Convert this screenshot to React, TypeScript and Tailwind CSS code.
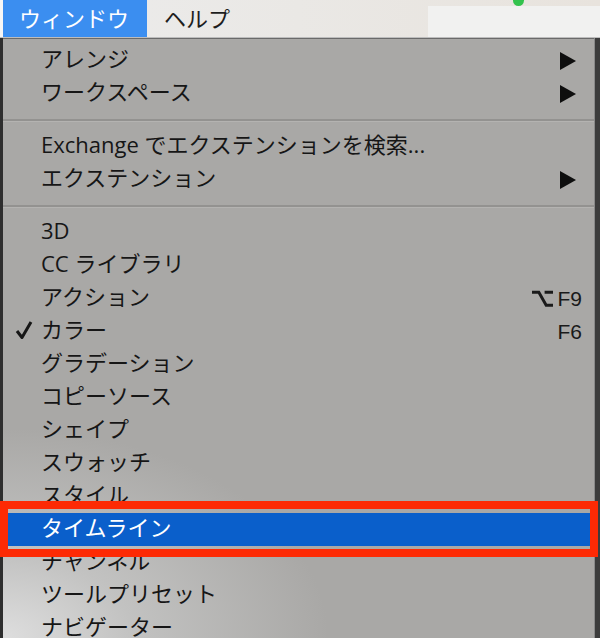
import { ReactNode } from 'react';

interface MenuItem {
    label: string;
    sub?: boolean;
    shortcut?: ReactNode;
    checked?: boolean;
    active?: boolean;
}

const OptionKey = () => (
    <svg width="21" height="19" viewBox="0 0 20 18" className="mr-[4px]">
        <path d="M0 3 H6.5 L13.5 15.5 H20 M12 3 H20" fill="none" stroke="#1a1a1a" strokeWidth="2.8" />
    </svg>
);

const groups: MenuItem[][] = [
    [
        { label: 'アレンジ', sub: true },
        { label: 'ワークスペース', sub: true },
    ],
    [
        { label: 'Exchange でエクステンションを検索...' },
        { label: 'エクステンション', sub: true },
    ],
    [
        { label: '3D' },
        { label: 'CC ライブラリ' },
        { label: 'アクション', shortcut: <><OptionKey />F9</> },
        { label: 'カラー', checked: true, shortcut: 'F6' },
        { label: 'グラデーション' },
        { label: 'コピーソース' },
        { label: 'シェイプ' },
        { label: 'スウォッチ' },
        { label: 'スタイル' },
        { label: 'タイムライン', active: true },
        { label: 'チャンネル' },
        { label: 'ツールプリセット' },
        { label: 'ナビゲーター' },
    ],
];

function Row({ item }: { item: MenuItem }) {
    return (
        <div
            className={`relative flex items-center h-[33px] mx-[3px] pl-[35px] pr-[9px] pb-[6px] ${item.active ? 'bg-[#0a5fcb] text-white' : 'text-[#161616]'}`}
        >
            {item.checked && (
                <svg width="18" height="20" viewBox="0 0 18 20" className="absolute left-[9px] top-[5px]">
                    <path d="M2 11 L7 17.5 L16 2" fill="none" stroke="#161616" strokeWidth="3" strokeLinejoin="round" />
                </svg>
            )}
            <span className="flex-1 font-[family-name:'Open_Sans','Noto_Sans_CJK_JP',sans-serif] text-[22px] leading-none whitespace-nowrap">
                {item.label}
            </span>
            {item.sub && (
                <svg width="16" height="18" viewBox="0 0 16 18" className="mr-[6px] mt-[6px]">
                    <polygon points="0,0 16,9 0,18" fill="#0e0e0e" />
                </svg>
            )}
            {item.shortcut && (
                <span className="flex items-center mt-[6px] font-['Liberation_Sans',sans-serif] text-[21px] leading-none text-[#1a1a1a]">
                    {item.shortcut}
                </span>
            )}
        </div>
    );
}

export default function App() {
    return (
        <div className="relative w-[600px] h-[638px] overflow-hidden bg-[#3a3a3a] font-['Noto_Sans_CJK_JP',sans-serif]">
            {/* menubar */}
            <div className="relative flex h-[38px] bg-gradient-to-r from-[#ececec] via-[#eae8e5] to-[#e8e3dd] border-b border-[#bdbdbd]">
                <div className="w-[3px] bg-[#f6f6f6]" />
                <div className="flex items-center w-[144px] pl-[16px] pb-[3px] bg-[#3b8ef0] text-white text-[22px] leading-none">
                    ウィンドウ
                </div>
                <div className="flex items-center pl-[17px] pb-[3px] text-[#1e1e1e] text-[22px] leading-none">ヘルプ</div>
                <div className="ml-auto mt-[6px] w-[172px] bg-[#f1f1f0]" />
                <div className="absolute left-[513px] top-[-5px] w-[11px] h-[11px] rounded-full bg-[#33c24d]" />
            </div>

            <div className="flex h-[600px]">
                <div className="w-[3px] bg-[#2e2e2e]" />
                <div className="flex-1 border-t border-[#6a6a6a] pt-[5px] bg-[radial-gradient(ellipse_55%_35%_at_0%_100%,#dedede_0%,#c2c2c1_40%,#a9a8a6_100%)] bg-[#a9a8a6]">
                    {groups.map((group, gi) => (
                        <div key={gi}>
                            {gi > 0 && (
                                <div className="flex flex-col justify-center h-[20px]">
                                    <div className="h-[2px] bg-[#939290]" />
                                    <div className="h-px bg-[#b4b3b1]" />
                                </div>
                            )}
                            {group.map((item) => (
                                <Row key={item.label} item={item} />
                            ))}
                        </div>
                    ))}
                </div>
                <div className="w-[6px] bg-[#3c3c3c] border-l border-[#8a8a8a]" />
            </div>

            {/* annotation box */}
            <div className="absolute left-0 top-[501px] w-[598px] h-[56px] border-[8px] border-[#fd2a04]" />
        </div>
    );
}
